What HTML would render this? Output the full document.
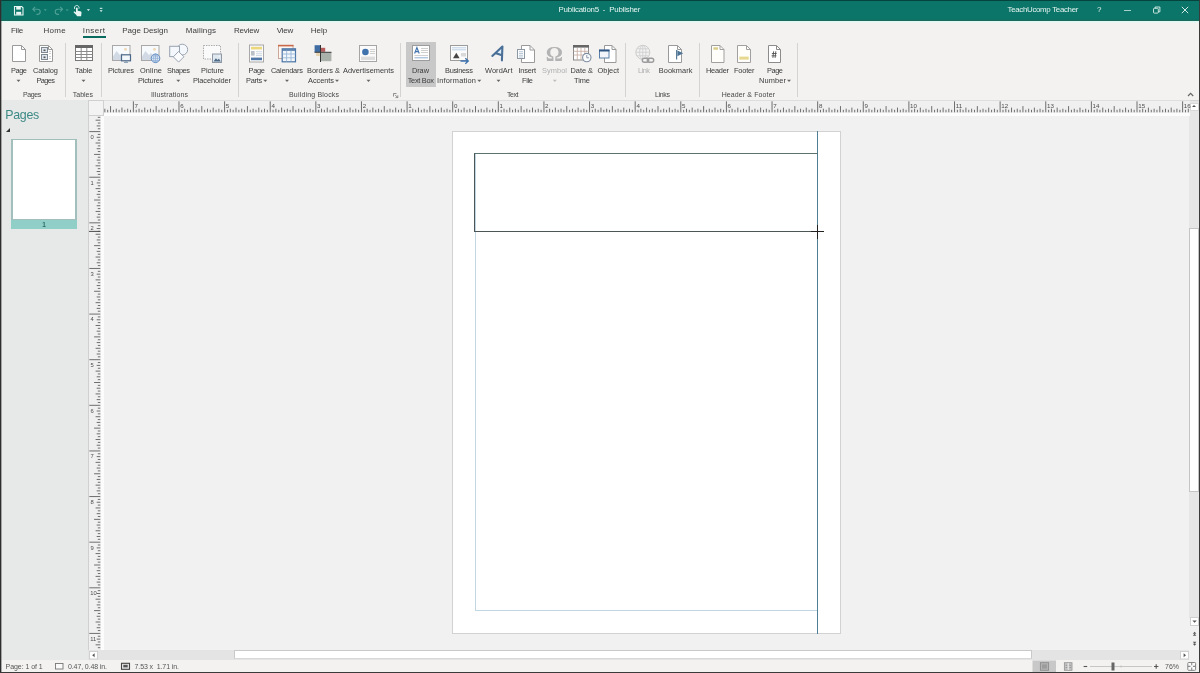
<!DOCTYPE html>
<html><head><meta charset="utf-8"><title>Publication5 - Publisher</title>
<style>
*{box-sizing:border-box;margin:0;padding:0}
html,body{width:1200px;height:673px;overflow:hidden;background:#f0f0f0;font-family:"Liberation Sans",sans-serif;}
.abs{position:absolute}
.x{position:absolute;white-space:nowrap;display:block}
#app{position:relative;width:1200px;height:673px;overflow:hidden;background:#f1f1f1;will-change:transform}
#title{left:0;top:0;width:1200px;height:20.750px;background:linear-gradient(#0a7568 0,#0a7568 17.500px,#176b5f 19.500px);border-top:1px solid #05443c}
#ribbon{left:0;top:21px;width:1200px;height:79px;background:#f3f2f1}
.sep{position:absolute;top:43px;width:1px;height:54px;background:#d4d3d2}
.ar{position:absolute;width:0;height:0;border-left:1.800px solid transparent;border-right:1.800px solid transparent;border-top:2.200px solid #707070}
#pane{left:1px;top:100px;width:87px;height:560px;background:#e7e8e8}
#status{left:0;top:660px;width:1200px;height:13px;background:#f3f2f1}
</style></head><body><div id="app">

<div id="title" class="abs"></div>
<span class="x" style="left:558.50px;top:5.36px;font-size:7.9px;line-height:10px;letter-spacing:-0.216px;color:#e6f4f1">Publication5 &nbsp;- &nbsp;Publisher</span>
<span class="x" style="left:1007.50px;top:5.16px;font-size:7.9px;line-height:10px;letter-spacing:-0.310px;color:#e6f4f1">TeachUcomp Teacher</span>
<span class="x" style="left:1097.00px;top:5.03px;font-size:8px;line-height:10px;letter-spacing:-0.449px;color:#e6f4f1">?</span>
<div id="ribbon" class="abs" style="top:20.750px;height:79.250px"></div>
<div class="abs" style="left:0;top:20.750px;width:1200px;height:2.500px;background:linear-gradient(#d9f8f2,#e6f7f3 60%,#f3f2f1)"></div>
<div class="abs" style="left:0;top:99.700px;width:1200px;height:1px;background:#d4d4d4"></div>
<span class="x" style="left:11.00px;top:26.03px;font-size:8px;line-height:10px;letter-spacing:-0.197px;color:#3c3c3c">File</span>
<span class="x" style="left:43.40px;top:26.03px;font-size:8px;line-height:10px;letter-spacing:0.286px;color:#3c3c3c">Home</span>
<span class="x" style="left:82.80px;top:26.03px;font-size:8px;line-height:10px;letter-spacing:0.438px;color:#3c3c3c">Insert</span>
<span class="x" style="left:122.30px;top:26.03px;font-size:8px;line-height:10px;letter-spacing:-0.011px;color:#3c3c3c">Page Design</span>
<span class="x" style="left:185.70px;top:26.03px;font-size:8px;line-height:10px;letter-spacing:0.136px;color:#3c3c3c">Mailings</span>
<span class="x" style="left:234.00px;top:26.03px;font-size:8px;line-height:10px;letter-spacing:-0.186px;color:#3c3c3c">Review</span>
<span class="x" style="left:276.70px;top:26.03px;font-size:8px;line-height:10px;letter-spacing:-0.199px;color:#3c3c3c">View</span>
<span class="x" style="left:310.70px;top:26.03px;font-size:8px;line-height:10px;letter-spacing:0.049px;color:#3c3c3c">Help</span>
<div class="abs" style="left:83px;top:36px;width:22.5px;height:2px;background:#0a6b5f"></div>
<div class="sep" style="left:64.5px"></div>
<div class="sep" style="left:101.0px"></div>
<div class="sep" style="left:238.0px"></div>
<div class="sep" style="left:399.9px"></div>
<div class="sep" style="left:625.2px"></div>
<div class="sep" style="left:698.5px"></div>
<div class="sep" style="left:797.1px"></div>
<span class="x" style="left:23.10px;top:90.17px;font-size:7px;line-height:10px;letter-spacing:-0.412px;color:#484848">Pages</span>
<span class="x" style="left:72.80px;top:90.17px;font-size:7px;line-height:10px;letter-spacing:-0.007px;color:#484848">Tables</span>
<span class="x" style="left:151.00px;top:90.17px;font-size:7px;line-height:10px;letter-spacing:0.133px;color:#484848">Illustrations</span>
<span class="x" style="left:289.00px;top:90.17px;font-size:7px;line-height:10px;letter-spacing:0.181px;color:#484848">Building Blocks</span>
<span class="x" style="left:507.00px;top:90.17px;font-size:7px;line-height:10px;letter-spacing:-0.446px;color:#484848">Text</span>
<span class="x" style="left:655.00px;top:90.17px;font-size:7px;line-height:10px;letter-spacing:-0.335px;color:#484848">Links</span>
<span class="x" style="left:721.70px;top:90.17px;font-size:7px;line-height:10px;letter-spacing:0.111px;color:#484848">Header &amp; Footer</span>
<div class="abs" style="left:406px;top:42px;width:30px;height:45px;background:#c8c8c8"></div>
<span class="x" style="left:11.00px;top:65.64px;font-size:7.4px;line-height:10px;letter-spacing:-0.428px;color:#3a3a3a">Page</span>
<span class="x" style="left:33.00px;top:65.64px;font-size:7.4px;line-height:10px;letter-spacing:-0.084px;color:#3a3a3a">Catalog</span>
<span class="x" style="left:36.50px;top:75.74px;font-size:7.4px;line-height:10px;letter-spacing:-0.621px;color:#3a3a3a">Pages</span>
<span class="x" style="left:75.00px;top:65.64px;font-size:7.4px;line-height:10px;letter-spacing:-0.048px;color:#3a3a3a">Table</span>
<span class="x" style="left:108.00px;top:65.64px;font-size:7.4px;line-height:10px;letter-spacing:-0.105px;color:#3a3a3a">Pictures</span>
<span class="x" style="left:140.00px;top:65.64px;font-size:7.4px;line-height:10px;letter-spacing:0.122px;color:#3a3a3a">Online</span>
<span class="x" style="left:138.00px;top:75.74px;font-size:7.4px;line-height:10px;letter-spacing:-0.176px;color:#3a3a3a">Pictures</span>
<span class="x" style="left:167.00px;top:65.64px;font-size:7.4px;line-height:10px;letter-spacing:-0.420px;color:#3a3a3a">Shapes</span>
<span class="x" style="left:201.00px;top:65.64px;font-size:7.4px;line-height:10px;letter-spacing:-0.005px;color:#3a3a3a">Picture</span>
<span class="x" style="left:193.00px;top:75.74px;font-size:7.4px;line-height:10px;letter-spacing:-0.108px;color:#3a3a3a">Placeholder</span>
<span class="x" style="left:248.60px;top:65.64px;font-size:7.4px;line-height:10px;letter-spacing:-0.294px;color:#3a3a3a">Page</span>
<span class="x" style="left:246.00px;top:75.74px;font-size:7.4px;line-height:10px;letter-spacing:-0.243px;color:#3a3a3a">Parts</span>
<span class="x" style="left:271.00px;top:65.64px;font-size:7.4px;line-height:10px;letter-spacing:-0.216px;color:#3a3a3a">Calendars</span>
<span class="x" style="left:307.00px;top:65.64px;font-size:7.4px;line-height:10px;letter-spacing:0.012px;color:#3a3a3a">Borders &amp;</span>
<span class="x" style="left:308.00px;top:75.74px;font-size:7.4px;line-height:10px;letter-spacing:-0.054px;color:#3a3a3a">Accents</span>
<span class="x" style="left:343.00px;top:65.64px;font-size:7.4px;line-height:10px;letter-spacing:0.000px;color:#3a3a3a">Advertisements</span>
<span class="x" style="left:412.00px;top:65.64px;font-size:7.4px;line-height:10px;letter-spacing:-0.090px;color:#3a3a3a">Draw</span>
<span class="x" style="left:407.70px;top:75.74px;font-size:7.4px;line-height:10px;letter-spacing:-0.297px;color:#3a3a3a">Text Box</span>
<span class="x" style="left:445.00px;top:65.64px;font-size:7.4px;line-height:10px;letter-spacing:-0.290px;color:#3a3a3a">Business</span>
<span class="x" style="left:437.00px;top:75.74px;font-size:7.4px;line-height:10px;letter-spacing:0.198px;color:#3a3a3a">Information</span>
<span class="x" style="left:485.00px;top:65.64px;font-size:7.4px;line-height:10px;letter-spacing:0.083px;color:#3a3a3a">WordArt</span>
<span class="x" style="left:518.50px;top:65.64px;font-size:7.4px;line-height:10px;letter-spacing:-0.202px;color:#3a3a3a">Insert</span>
<span class="x" style="left:522.00px;top:75.74px;font-size:7.4px;line-height:10px;letter-spacing:-0.308px;color:#3a3a3a">File</span>
<span class="x" style="left:570.50px;top:65.64px;font-size:7.4px;line-height:10px;letter-spacing:-0.025px;color:#3a3a3a">Date &amp;</span>
<span class="x" style="left:574.00px;top:75.74px;font-size:7.4px;line-height:10px;letter-spacing:-0.057px;color:#3a3a3a">Time</span>
<span class="x" style="left:597.50px;top:65.64px;font-size:7.4px;line-height:10px;letter-spacing:0.023px;color:#3a3a3a">Object</span>
<span class="x" style="left:658.80px;top:65.64px;font-size:7.4px;line-height:10px;letter-spacing:0.055px;color:#3a3a3a">Bookmark</span>
<span class="x" style="left:706.00px;top:65.64px;font-size:7.4px;line-height:10px;letter-spacing:-0.254px;color:#3a3a3a">Header</span>
<span class="x" style="left:734.00px;top:65.64px;font-size:7.4px;line-height:10px;letter-spacing:-0.178px;color:#3a3a3a">Footer</span>
<span class="x" style="left:767.00px;top:65.64px;font-size:7.4px;line-height:10px;letter-spacing:-0.428px;color:#3a3a3a">Page</span>
<span class="x" style="left:759.00px;top:75.74px;font-size:7.4px;line-height:10px;letter-spacing:0.136px;color:#3a3a3a">Number</span>
<span class="x" style="left:542.00px;top:65.64px;font-size:7.4px;line-height:10px;letter-spacing:0.065px;color:#b0b0b0">Symbol</span>
<span class="x" style="left:638.00px;top:65.64px;font-size:7.4px;line-height:10px;letter-spacing:-0.525px;color:#b0b0b0">Link</span>











<div id="pane" class="abs"></div>
<span class="x" style="left:5.30px;top:107.40px;font-size:12.4px;line-height:16px;letter-spacing:-0.315px;color:#3c8a85">Pages</span>
<div class="abs" style="left:6px;top:128px;width:0;height:0;border-left:4px solid transparent;border-bottom:4px solid #333"></div>
<div class="abs" style="left:11.400px;top:139px;width:65.200px;height:90.300px;background:#a3bfbc"></div>
<div class="abs" style="left:11.400px;top:219.600px;width:65.200px;height:9.700px;background:#90cfc7"></div>
<div class="abs" style="left:13px;top:140.300px;width:62.200px;height:79.200px;background:#fff"></div>
<div class="abs" style="left:11.400px;top:220.200px;width:65.200px;font-size:6.500px;line-height:9px;text-align:center;color:#2c6d66;font-weight:bold">1</div>
<div class="abs" style="left:452px;top:131px;width:389px;height:503px;background:#fff;border:1px solid #d2d2d2"></div>
<div class="abs" style="left:474.800px;top:153px;width:343.200px;height:458px;border:1px solid #c0d6e2"></div>
<div class="abs" style="left:817px;top:131px;width:1px;height:502.5px;background:#4f7f96"></div>
<div class="abs" style="left:474px;top:153px;width:343.5px;height:79px;border:1px solid #4c5656;border-top-color:#5a7272;border-right:none;"></div>
<div class="abs" style="left:811px;top:231px;width:13px;height:1px;background:#222"></div>
<div class="abs" style="left:817px;top:224.5px;width:1px;height:14px;background:#222"></div>
<div class="abs" style="left:1189.200px;top:100.500px;width:10px;height:517.500px;background:#e6e6e6"></div>
<div class="abs" style="left:1189.800px;top:102.500px;width:8.800px;height:8px;background:#fff;border:1px solid #d8d8d8"></div>
<div class="abs" style="left:1192.2px;top:105.3px;width:0;height:0;border-left:2.2px solid transparent;border-right:2.2px solid transparent;border-bottom:2.4px solid #555"></div>
<div class="abs" style="left:1189.200px;top:228.200px;width:9.800px;height:264.300px;background:#fff;border:1px solid #c4c4c4"></div>
<div class="abs" style="left:88px;top:650.300px;width:1101.200px;height:9.700px;background:#e4e4e4"></div>
<div class="abs" style="left:233.500px;top:649.800px;width:798px;height:9px;background:#fff;border:1px solid #c9c9c9;border-bottom-color:#d8d8d8"></div>
<div class="abs" style="left:88px;top:100px;width:1102px;height:15.500px;background:#fcfcfc"></div>
<div class="abs" style="left:103px;top:100px;width:1087px;height:12.500px;background:#f0f0f0;border-top:1px solid #dedede"></div>
<div class="abs" style="left:87.500px;top:100px;width:16.500px;height:15.500px;background:#f3f3f3;border:1px solid #d0d0d0"></div>
<div class="abs" style="left:87.500px;top:115.500px;width:16px;height:534.500px;background:#fcfcfc"></div>
<div class="abs" style="left:87.500px;top:115.500px;width:13.200px;height:534.500px;background:#f0f0f0;border-left:1px solid #d0d0d0"></div>
<svg class="abs" style="left:0;top:0" width="1200" height="673" viewBox="0 0 1200 673" shape-rendering="auto"><path d="M104.85 112.3v-3.6M107.70 112.3v-2.5M110.55 112.3v-6.2M113.40 112.3v-2.5M116.25 112.3v-3.6M119.10 112.3v-2.5M121.95 112.3v-4.7M124.81 112.3v-2.5M127.66 112.3v-3.6M130.51 112.3v-2.5M133.36 112.3v-11M136.21 112.3v-2.5M139.06 112.3v-3.6M141.91 112.3v-2.5M144.76 112.3v-4.7M147.62 112.3v-2.5M150.47 112.3v-3.6M153.32 112.3v-2.5M156.17 112.3v-6.2M159.02 112.3v-2.5M161.87 112.3v-3.6M164.72 112.3v-2.5M167.57 112.3v-4.7M170.43 112.3v-2.5M173.28 112.3v-3.6M176.13 112.3v-2.5M178.98 112.3v-11M181.83 112.3v-2.5M184.68 112.3v-3.6M187.53 112.3v-2.5M190.38 112.3v-4.7M193.24 112.3v-2.5M196.09 112.3v-3.6M198.94 112.3v-2.5M201.79 112.3v-6.2M204.64 112.3v-2.5M207.49 112.3v-3.6M210.34 112.3v-2.5M213.19 112.3v-4.7M216.05 112.3v-2.5M218.90 112.3v-3.6M221.75 112.3v-2.5M224.60 112.3v-11M227.45 112.3v-2.5M230.30 112.3v-3.6M233.15 112.3v-2.5M236.00 112.3v-4.7M238.86 112.3v-2.5M241.71 112.3v-3.6M244.56 112.3v-2.5M247.41 112.3v-6.2M250.26 112.3v-2.5M253.11 112.3v-3.6M255.96 112.3v-2.5M258.81 112.3v-4.7M261.67 112.3v-2.5M264.52 112.3v-3.6M267.37 112.3v-2.5M270.22 112.3v-11M273.07 112.3v-2.5M275.92 112.3v-3.6M278.77 112.3v-2.5M281.62 112.3v-4.7M284.48 112.3v-2.5M287.33 112.3v-3.6M290.18 112.3v-2.5M293.03 112.3v-6.2M295.88 112.3v-2.5M298.73 112.3v-3.6M301.58 112.3v-2.5M304.44 112.3v-4.7M307.29 112.3v-2.5M310.14 112.3v-3.6M312.99 112.3v-2.5M315.84 112.3v-11M318.69 112.3v-2.5M321.54 112.3v-3.6M324.39 112.3v-2.5M327.25 112.3v-4.7M330.10 112.3v-2.5M332.95 112.3v-3.6M335.80 112.3v-2.5M338.65 112.3v-6.2M341.50 112.3v-2.5M344.35 112.3v-3.6M347.20 112.3v-2.5M350.06 112.3v-4.7M352.91 112.3v-2.5M355.76 112.3v-3.6M358.61 112.3v-2.5M361.46 112.3v-11M364.31 112.3v-2.5M367.16 112.3v-3.6M370.01 112.3v-2.5M372.87 112.3v-4.7M375.72 112.3v-2.5M378.57 112.3v-3.6M381.42 112.3v-2.5M384.27 112.3v-6.2M387.12 112.3v-2.5M389.97 112.3v-3.6M392.82 112.3v-2.5M395.68 112.3v-4.7M398.53 112.3v-2.5M401.38 112.3v-3.6M404.23 112.3v-2.5M407.08 112.3v-11M409.93 112.3v-2.5M412.78 112.3v-3.6M415.63 112.3v-2.5M418.49 112.3v-4.7M421.34 112.3v-2.5M424.19 112.3v-3.6M427.04 112.3v-2.5M429.89 112.3v-6.2M432.74 112.3v-2.5M435.59 112.3v-3.6M438.44 112.3v-2.5M441.30 112.3v-4.7M444.15 112.3v-2.5M447.00 112.3v-3.6M449.85 112.3v-2.5M452.70 112.3v-11M455.55 112.3v-2.5M458.40 112.3v-3.6M461.25 112.3v-2.5M464.10 112.3v-4.7M466.96 112.3v-2.5M469.81 112.3v-3.6M472.66 112.3v-2.5M475.51 112.3v-6.2M478.36 112.3v-2.5M481.21 112.3v-3.6M484.06 112.3v-2.5M486.91 112.3v-4.7M489.77 112.3v-2.5M492.62 112.3v-3.6M495.47 112.3v-2.5M498.32 112.3v-11M501.17 112.3v-2.5M504.02 112.3v-3.6M506.87 112.3v-2.5M509.72 112.3v-4.7M512.58 112.3v-2.5M515.43 112.3v-3.6M518.28 112.3v-2.5M521.13 112.3v-6.2M523.98 112.3v-2.5M526.83 112.3v-3.6M529.68 112.3v-2.5M532.53 112.3v-4.7M535.39 112.3v-2.5M538.24 112.3v-3.6M541.09 112.3v-2.5M543.94 112.3v-11M546.79 112.3v-2.5M549.64 112.3v-3.6M552.49 112.3v-2.5M555.35 112.3v-4.7M558.20 112.3v-2.5M561.05 112.3v-3.6M563.90 112.3v-2.5M566.75 112.3v-6.2M569.60 112.3v-2.5M572.45 112.3v-3.6M575.30 112.3v-2.5M578.15 112.3v-4.7M581.01 112.3v-2.5M583.86 112.3v-3.6M586.71 112.3v-2.5M589.56 112.3v-11M592.41 112.3v-2.5M595.26 112.3v-3.6M598.11 112.3v-2.5M600.96 112.3v-4.7M603.82 112.3v-2.5M606.67 112.3v-3.6M609.52 112.3v-2.5M612.37 112.3v-6.2M615.22 112.3v-2.5M618.07 112.3v-3.6M620.92 112.3v-2.5M623.77 112.3v-4.7M626.63 112.3v-2.5M629.48 112.3v-3.6M632.33 112.3v-2.5M635.18 112.3v-11M638.03 112.3v-2.5M640.88 112.3v-3.6M643.73 112.3v-2.5M646.59 112.3v-4.7M649.44 112.3v-2.5M652.29 112.3v-3.6M655.14 112.3v-2.5M657.99 112.3v-6.2M660.84 112.3v-2.5M663.69 112.3v-3.6M666.54 112.3v-2.5M669.39 112.3v-4.7M672.25 112.3v-2.5M675.10 112.3v-3.6M677.95 112.3v-2.5M680.80 112.3v-11M683.65 112.3v-2.5M686.50 112.3v-3.6M689.35 112.3v-2.5M692.20 112.3v-4.7M695.06 112.3v-2.5M697.91 112.3v-3.6M700.76 112.3v-2.5M703.61 112.3v-6.2M706.46 112.3v-2.5M709.31 112.3v-3.6M712.16 112.3v-2.5M715.01 112.3v-4.7M717.87 112.3v-2.5M720.72 112.3v-3.6M723.57 112.3v-2.5M726.42 112.3v-11M729.27 112.3v-2.5M732.12 112.3v-3.6M734.97 112.3v-2.5M737.83 112.3v-4.7M740.68 112.3v-2.5M743.53 112.3v-3.6M746.38 112.3v-2.5M749.23 112.3v-6.2M752.08 112.3v-2.5M754.93 112.3v-3.6M757.78 112.3v-2.5M760.63 112.3v-4.7M763.49 112.3v-2.5M766.34 112.3v-3.6M769.19 112.3v-2.5M772.04 112.3v-11M774.89 112.3v-2.5M777.74 112.3v-3.6M780.59 112.3v-2.5M783.44 112.3v-4.7M786.30 112.3v-2.5M789.15 112.3v-3.6M792.00 112.3v-2.5M794.85 112.3v-6.2M797.70 112.3v-2.5M800.55 112.3v-3.6M803.40 112.3v-2.5M806.25 112.3v-4.7M809.11 112.3v-2.5M811.96 112.3v-3.6M814.81 112.3v-2.5M817.66 112.3v-11M820.51 112.3v-2.5M823.36 112.3v-3.6M826.21 112.3v-2.5M829.06 112.3v-4.7M831.92 112.3v-2.5M834.77 112.3v-3.6M837.62 112.3v-2.5M840.47 112.3v-6.2M843.32 112.3v-2.5M846.17 112.3v-3.6M849.02 112.3v-2.5M851.88 112.3v-4.7M854.73 112.3v-2.5M857.58 112.3v-3.6M860.43 112.3v-2.5M863.28 112.3v-11M866.13 112.3v-2.5M868.98 112.3v-3.6M871.83 112.3v-2.5M874.68 112.3v-4.7M877.54 112.3v-2.5M880.39 112.3v-3.6M883.24 112.3v-2.5M886.09 112.3v-6.2M888.94 112.3v-2.5M891.79 112.3v-3.6M894.64 112.3v-2.5M897.49 112.3v-4.7M900.35 112.3v-2.5M903.20 112.3v-3.6M906.05 112.3v-2.5M908.90 112.3v-11M911.75 112.3v-2.5M914.60 112.3v-3.6M917.45 112.3v-2.5M920.30 112.3v-4.7M923.16 112.3v-2.5M926.01 112.3v-3.6M928.86 112.3v-2.5M931.71 112.3v-6.2M934.56 112.3v-2.5M937.41 112.3v-3.6M940.26 112.3v-2.5M943.12 112.3v-4.7M945.97 112.3v-2.5M948.82 112.3v-3.6M951.67 112.3v-2.5M954.52 112.3v-11M957.37 112.3v-2.5M960.22 112.3v-3.6M963.07 112.3v-2.5M965.92 112.3v-4.7M968.78 112.3v-2.5M971.63 112.3v-3.6M974.48 112.3v-2.5M977.33 112.3v-6.2M980.18 112.3v-2.5M983.03 112.3v-3.6M985.88 112.3v-2.5M988.73 112.3v-4.7M991.59 112.3v-2.5M994.44 112.3v-3.6M997.29 112.3v-2.5M1000.14 112.3v-11M1002.99 112.3v-2.5M1005.84 112.3v-3.6M1008.69 112.3v-2.5M1011.54 112.3v-4.7M1014.40 112.3v-2.5M1017.25 112.3v-3.6M1020.10 112.3v-2.5M1022.95 112.3v-6.2M1025.80 112.3v-2.5M1028.65 112.3v-3.6M1031.50 112.3v-2.5M1034.36 112.3v-4.7M1037.21 112.3v-2.5M1040.06 112.3v-3.6M1042.91 112.3v-2.5M1045.76 112.3v-11M1048.61 112.3v-2.5M1051.46 112.3v-3.6M1054.31 112.3v-2.5M1057.16 112.3v-4.7M1060.02 112.3v-2.5M1062.87 112.3v-3.6M1065.72 112.3v-2.5M1068.57 112.3v-6.2M1071.42 112.3v-2.5M1074.27 112.3v-3.6M1077.12 112.3v-2.5M1079.97 112.3v-4.7M1082.83 112.3v-2.5M1085.68 112.3v-3.6M1088.53 112.3v-2.5M1091.38 112.3v-11M1094.23 112.3v-2.5M1097.08 112.3v-3.6M1099.93 112.3v-2.5M1102.78 112.3v-4.7M1105.64 112.3v-2.5M1108.49 112.3v-3.6M1111.34 112.3v-2.5M1114.19 112.3v-6.2M1117.04 112.3v-2.5M1119.89 112.3v-3.6M1122.74 112.3v-2.5M1125.60 112.3v-4.7M1128.45 112.3v-2.5M1131.30 112.3v-3.6M1134.15 112.3v-2.5M1137.00 112.3v-11M1139.85 112.3v-2.5M1142.70 112.3v-3.6M1145.55 112.3v-2.5M1148.40 112.3v-4.7M1151.26 112.3v-2.5M1154.11 112.3v-3.6M1156.96 112.3v-2.5M1159.81 112.3v-6.2M1162.66 112.3v-2.5M1165.51 112.3v-3.6M1168.36 112.3v-2.5M1171.21 112.3v-4.7M1174.07 112.3v-2.5M1176.92 112.3v-3.6M1179.77 112.3v-2.5M1182.62 112.3v-11M1185.47 112.3v-2.5M1188.32 112.3v-3.6" stroke="#6e6e6e" stroke-width="1" fill="none"/><path d="M100.3 117.34h-2.5M100.3 120.19h-4.7M100.3 123.05h-2.5M100.3 125.90h-3.6M100.3 128.75h-2.5M100.3 131.60h-11M100.3 134.45h-2.5M100.3 137.30h-3.6M100.3 140.15h-2.5M100.3 143.00h-4.7M100.3 145.86h-2.5M100.3 148.71h-3.6M100.3 151.56h-2.5M100.3 154.41h-6.2M100.3 157.26h-2.5M100.3 160.11h-3.6M100.3 162.96h-2.5M100.3 165.81h-4.7M100.3 168.67h-2.5M100.3 171.52h-3.6M100.3 174.37h-2.5M100.3 177.22h-11M100.3 180.07h-2.5M100.3 182.92h-3.6M100.3 185.77h-2.5M100.3 188.62h-4.7M100.3 191.48h-2.5M100.3 194.33h-3.6M100.3 197.18h-2.5M100.3 200.03h-6.2M100.3 202.88h-2.5M100.3 205.73h-3.6M100.3 208.58h-2.5M100.3 211.44h-4.7M100.3 214.29h-2.5M100.3 217.14h-3.6M100.3 219.99h-2.5M100.3 222.84h-11M100.3 225.69h-2.5M100.3 228.54h-3.6M100.3 231.39h-2.5M100.3 234.25h-4.7M100.3 237.10h-2.5M100.3 239.95h-3.6M100.3 242.80h-2.5M100.3 245.65h-6.2M100.3 248.50h-2.5M100.3 251.35h-3.6M100.3 254.20h-2.5M100.3 257.06h-4.7M100.3 259.91h-2.5M100.3 262.76h-3.6M100.3 265.61h-2.5M100.3 268.46h-11M100.3 271.31h-2.5M100.3 274.16h-3.6M100.3 277.01h-2.5M100.3 279.87h-4.7M100.3 282.72h-2.5M100.3 285.57h-3.6M100.3 288.42h-2.5M100.3 291.27h-6.2M100.3 294.12h-2.5M100.3 296.97h-3.6M100.3 299.82h-2.5M100.3 302.67h-4.7M100.3 305.53h-2.5M100.3 308.38h-3.6M100.3 311.23h-2.5M100.3 314.08h-11M100.3 316.93h-2.5M100.3 319.78h-3.6M100.3 322.63h-2.5M100.3 325.49h-4.7M100.3 328.34h-2.5M100.3 331.19h-3.6M100.3 334.04h-2.5M100.3 336.89h-6.2M100.3 339.74h-2.5M100.3 342.59h-3.6M100.3 345.44h-2.5M100.3 348.29h-4.7M100.3 351.15h-2.5M100.3 354.00h-3.6M100.3 356.85h-2.5M100.3 359.70h-11M100.3 362.55h-2.5M100.3 365.40h-3.6M100.3 368.25h-2.5M100.3 371.11h-4.7M100.3 373.96h-2.5M100.3 376.81h-3.6M100.3 379.66h-2.5M100.3 382.51h-6.2M100.3 385.36h-2.5M100.3 388.21h-3.6M100.3 391.06h-2.5M100.3 393.91h-4.7M100.3 396.77h-2.5M100.3 399.62h-3.6M100.3 402.47h-2.5M100.3 405.32h-11M100.3 408.17h-2.5M100.3 411.02h-3.6M100.3 413.87h-2.5M100.3 416.73h-4.7M100.3 419.58h-2.5M100.3 422.43h-3.6M100.3 425.28h-2.5M100.3 428.13h-6.2M100.3 430.98h-2.5M100.3 433.83h-3.6M100.3 436.68h-2.5M100.3 439.53h-4.7M100.3 442.39h-2.5M100.3 445.24h-3.6M100.3 448.09h-2.5M100.3 450.94h-11M100.3 453.79h-2.5M100.3 456.64h-3.6M100.3 459.49h-2.5M100.3 462.35h-4.7M100.3 465.20h-2.5M100.3 468.05h-3.6M100.3 470.90h-2.5M100.3 473.75h-6.2M100.3 476.60h-2.5M100.3 479.45h-3.6M100.3 482.30h-2.5M100.3 485.15h-4.7M100.3 488.01h-2.5M100.3 490.86h-3.6M100.3 493.71h-2.5M100.3 496.56h-11M100.3 499.41h-2.5M100.3 502.26h-3.6M100.3 505.11h-2.5M100.3 507.96h-4.7M100.3 510.82h-2.5M100.3 513.67h-3.6M100.3 516.52h-2.5M100.3 519.37h-6.2M100.3 522.22h-2.5M100.3 525.07h-3.6M100.3 527.92h-2.5M100.3 530.77h-4.7M100.3 533.63h-2.5M100.3 536.48h-3.6M100.3 539.33h-2.5M100.3 542.18h-11M100.3 545.03h-2.5M100.3 547.88h-3.6M100.3 550.73h-2.5M100.3 553.58h-4.7M100.3 556.44h-2.5M100.3 559.29h-3.6M100.3 562.14h-2.5M100.3 564.99h-6.2M100.3 567.84h-2.5M100.3 570.69h-3.6M100.3 573.54h-2.5M100.3 576.39h-4.7M100.3 579.25h-2.5M100.3 582.10h-3.6M100.3 584.95h-2.5M100.3 587.80h-11M100.3 590.65h-2.5M100.3 593.50h-3.6M100.3 596.35h-2.5M100.3 599.20h-4.7M100.3 602.06h-2.5M100.3 604.91h-3.6M100.3 607.76h-2.5M100.3 610.61h-6.2M100.3 613.46h-2.5M100.3 616.31h-3.6M100.3 619.16h-2.5M100.3 622.01h-4.7M100.3 624.87h-2.5M100.3 627.72h-3.6M100.3 630.57h-2.5M100.3 633.42h-11M100.3 636.27h-2.5M100.3 639.12h-3.6M100.3 641.97h-2.5M100.3 644.83h-4.7M100.3 647.68h-2.5" stroke="#6e6e6e" stroke-width="1" fill="none"/><g font-family="Liberation Sans, sans-serif" font-size="6.200" fill="#4c4c4c"><text x="134.6" y="107.6">7</text><text x="180.2" y="107.6">6</text><text x="225.8" y="107.6">5</text><text x="271.4" y="107.6">4</text><text x="317.0" y="107.6">3</text><text x="362.7" y="107.6">2</text><text x="408.3" y="107.6">1</text><text x="453.9" y="107.6">0</text><text x="499.5" y="107.6">1</text><text x="545.1" y="107.6">2</text><text x="590.8" y="107.6">3</text><text x="636.4" y="107.6">4</text><text x="682.0" y="107.6">5</text><text x="727.6" y="107.6">6</text><text x="773.2" y="107.6">7</text><text x="818.9" y="107.6">8</text><text x="864.5" y="107.6">9</text><text x="910.1" y="107.6">10</text><text x="955.7" y="107.6">11</text><text x="1001.3" y="107.6">12</text><text x="1047.0" y="107.6">13</text><text x="1092.6" y="107.6">14</text><text x="1138.2" y="107.6">15</text><text x="1183.8" y="107.6">16</text><text font-size="5.800" x="90.4" y="138.9">0</text><text font-size="5.800" x="90.4" y="184.5">1</text><text font-size="5.800" x="90.4" y="230.1">2</text><text font-size="5.800" x="90.4" y="275.8">3</text><text font-size="5.800" x="90.4" y="321.4">4</text><text font-size="5.800" x="90.4" y="367.0">5</text><text font-size="5.800" x="90.4" y="412.6">6</text><text font-size="5.800" x="90.4" y="458.2">7</text><text font-size="5.800" x="90.4" y="503.9">8</text><text font-size="5.800" x="90.4" y="549.5">9</text><text font-size="5.800" x="90.3" y="595.1">10</text><text font-size="5.800" x="90.3" y="640.7">11</text></g><path d="M89 231.400h11.300" stroke="#4a4a4a" stroke-width="1"/></svg>
<div id="status" class="abs"></div>
<span class="x" style="left:5.60px;top:662.07px;font-size:7px;line-height:9px;letter-spacing:-0.059px;color:#555">Page: 1 of 1</span>
<span class="x" style="left:68.00px;top:662.07px;font-size:7px;line-height:9px;letter-spacing:-0.114px;color:#555">0.47, 0.48 in.</span>
<span class="x" style="left:134.50px;top:662.07px;font-size:7px;line-height:9px;letter-spacing:-0.095px;color:#555">7.53 x &nbsp;1.71 in.</span>
<span class="x" style="left:1165.00px;top:662.07px;font-size:7px;line-height:9px;letter-spacing:-0.005px;color:#555">76%</span>
<svg class="abs" style="left:0;top:0;filter:blur(.38px)" width="1200" height="673" viewBox="0 0 1200 673"><path d="M12.5 45.5h9l4 4v12h-13z" fill="#fff" stroke="#9a9a9a"/><path d="M21.5 45.5v4h4" fill="none" stroke="#9a9a9a"/><path d="M39.5 45.5h9l4 4v12h-13z" fill="#fff" stroke="#9a9a9a"/><path d="M48.5 45.5v4h4" fill="none" stroke="#9a9a9a"/><rect x="41.5" y="47.5" width="6" height="5" fill="#dfe6ee" stroke="#7f8790"/><rect x="43.5" y="49.5" width="2" height="1.6" fill="#555"/><rect x="41.5" y="54.5" width="6" height="5" fill="#dfe6ee" stroke="#7f8790"/><rect x="43.5" y="56.5" width="2" height="1.6" fill="#555"/><path d="M49 51.5h2M49 53.5h2M49 56.5h2M49 58.5h2" stroke="#d0d0d0"/><rect x="75.5" y="45.5" width="17" height="15" fill="#fff" stroke="#777"/><rect x="75" y="45" width="18" height="3" fill="#666"/><path d="M75.5 51.5h17M75.5 54.5h17M75.5 57.5h17M81.2 48v12.5M86.8 48v12.5" stroke="#8a8a8a" fill="none"/><rect x="112.5" y="45.5" width="17.5" height="15" fill="#f7fafd" stroke="#a8a8a8"/><path d="M113 60v-3.5l3.5-5.5 3.5 4 2-2 4 4.5v2.5z" fill="#d1dae4"/><circle cx="125.5" cy="49.3" r="1.500" fill="#efd9b6"/><rect x="121.500" y="54.800" width="9" height="6" fill="#f1f6fb" stroke="#4b6787" stroke-width="1.200"/><path d="M124 62.400h4M126 61v1.400" stroke="#7d95ae" stroke-width=".9"/><rect x="141.5" y="45.5" width="17.5" height="15" fill="#f7fafd" stroke="#a8a8a8"/><path d="M142 60v-3.5l3.5-5.5 3.5 4 2-2 4 4.5v2.5z" fill="#d1dae4"/><circle cx="154.5" cy="49.3" r="1.500" fill="#efd9b6"/><circle cx="155.500" cy="58.300" r="4.300" fill="#e3edf8" stroke="#5d88bd" stroke-width="1"/><path d="M151.300 58.300h8.400M155.500 54v8.600M152.300 56h6.400M152.300 60.600h6.400" stroke="#7ba0cf" stroke-width=".6" fill="none"/><ellipse cx="155.500" cy="58.300" rx="2" ry="4.300" fill="none" stroke="#7ba0cf" stroke-width=".6"/><circle cx="182.300" cy="49.600" r="5.400" fill="#f4f7fb" stroke="#98a3b0"/><rect x="169.700" y="46.300" width="9.800" height="10.300" fill="#f4f7fb" stroke="#98a3b0"/><path d="M178.600 51.500l5.300 5.300-5.300 5.300-5.300-5.300z" fill="#fbfcfe" stroke="#98a3b0"/><rect x="203.5" y="45.5" width="17" height="13.5" fill="#fafafa" stroke="#a8a8a8" stroke-dasharray="1.400 1.100"/><rect x="212.5" y="54" width="9" height="8.5" fill="#dfe7ef" stroke="#8f9aa6"/><path d="M213.5 61.5l2.4-3.2 1.6 1.8 1.4-1.4 2 2.8z" fill="#4f6a87"/><circle cx="219.3" cy="56.3" r=".8" fill="#f4f4f4"/><rect x="249.5" y="45" width="14" height="17" fill="#fbfbfb" stroke="#a8a8a8"/><rect x="251" y="46.8" width="11" height="2.6" fill="#ecd77c"/><rect x="251" y="51" width="3.6" height="4.6" fill="#b9bfc6"/><path d="M256 51.7h6M256 53.7h6M256 55.5h6" stroke="#cfd9e4"/><rect x="251" y="57.6" width="11" height="2.6" fill="#4f77a8"/><rect x="278.5" y="45.5" width="14.5" height="13" fill="#fdf6f2" stroke="#c9a99a"/><path d="M278 45.6h15.5" stroke="#c8694a" stroke-width="1.6"/><rect x="282.2" y="48.8" width="13.3" height="13" fill="#f1f6fb" stroke="#4a74a6" stroke-width="1.2"/><path d="M282.2 50h13.3" stroke="#4a74a6" stroke-width="1.6"/><path d="M282.5 54h13M282.5 57.8h13M286.6 50.5v11M291 50.5v11" stroke="#8fb0d4" stroke-width=".8" fill="none"/><rect x="314.6" y="45.2" width="5.6" height="6.8" fill="#3f6da3"/><rect x="321" y="47.8" width="4.2" height="4" fill="#b65c5c"/><rect x="321" y="52.6" width="10.4" height="8.6" fill="#aab0aa"/><rect x="316.2" y="53" width="3.6" height="3" fill="#e6d3ae"/><path d="M320.5 45v17M314.5 52.3h17" stroke="#333" stroke-width="1"/><rect x="359.5" y="45.5" width="17" height="16" fill="#fafafa" stroke="#a5a5a5"/><circle cx="365.4" cy="52" r="3.3" fill="#3f72ad"/><path d="M370 49.5h5M370 51.5h5M370 53.5h5" stroke="#cfcfcf"/><rect x="361" y="56.6" width="14" height="3.4" fill="#dcdcdc"/><rect x="412.5" y="45.5" width="17" height="15" fill="#fdfdfd" stroke="#9c9c9c"/><path d="M414.6 53.5l2.3-6 2.3 6M415.4 51.6h3" stroke="#3f72ad" stroke-width="1.1" fill="none"/><path d="M421 48.5h7M421 50.5h7M421 52.5h7M414.5 55.5h13.5" stroke="#cfcfcf"/><path d="M414.5 57.8h13.5" stroke="#8fb0d4"/><rect x="450.5" y="45.5" width="17" height="15" fill="#fbfbfb" stroke="#9c9c9c"/><path d="M452 47.8h14M452 49.8h14" stroke="#bcd0e6"/><path d="M453 58.3l3.3-5.6 3.3 5.6z" fill="#444"/><rect x="461" y="53" width="5" height="3.5" fill="#d9d9d9"/><path d="M460.5 61h7.5M465.3 58.2l3 2.8-3 2.8" stroke="#3f72ad" stroke-width="1.3" fill="none"/><path d="M497.300 52.300L502 47.800L501.800 54.800z" fill="#d5eafa" stroke="#e2f0fb" stroke-width="2.5"/><path d="M492.300 55.900L502.400 46.500L501.900 60.400M496 53.300L501.900 55.300" stroke="#4a6f97" stroke-width="2.100" fill="none" stroke-linecap="round" stroke-linejoin="round"/><path d="M521.5 45.5h8.5l4.5 4.5v12.5h-13z" fill="#fff" stroke="#9a9a9a"/><path d="M530.0 45.5v4.5h4.5" fill="none" stroke="#9a9a9a"/><rect x="517.5" y="49.5" width="7" height="9" fill="#fbfcfd" stroke="#8d98a5"/><path d="M519 51.700h4M519 53.500h4M519 55.300h4M519 57h4" stroke="#9fb1c6" stroke-width=".7"/><text x="554.300" y="60.800" font-family="Liberation Serif, serif" font-size="21.500" font-weight="bold" fill="#b3b3b3" text-anchor="middle">&#937;</text><rect x="573.5" y="45.5" width="15" height="14.5" fill="#fff" stroke="#8a8a8a"/><rect x="573" y="45" width="16" height="2.6" fill="#666"/><path d="M573.5 51.3h15M573.5 55h15M577.3 47.6v12.4M581 47.6v12.4M584.8 47.6v12.4" stroke="#c4a9a0" stroke-width=".8" fill="none"/><circle cx="586.8" cy="57.6" r="4.2" fill="#fbfcfe" stroke="#7d8da0" stroke-width="1.1"/><path d="M586.8 55v2.8h2.2" stroke="#7d8da0" stroke-width=".9" fill="none"/><path d="M604.5 45.5h7.5l4 4v13h-11.5z" fill="#fff" stroke="#9a9a9a"/><path d="M612.0 45.5v4h4" fill="none" stroke="#9a9a9a"/><rect x="599.5" y="50" width="9.5" height="8" fill="#f2f6fa" stroke="#5a7fa8"/><path d="M599 50.6h10.5" stroke="#2f5682" stroke-width="1.8"/><circle cx="642.800" cy="52.300" r="7" fill="none" stroke="#cacaca" stroke-width="1"/><ellipse cx="642.800" cy="52.300" rx="3.200" ry="7" fill="none" stroke="#d0d0d0" stroke-width=".9"/><path d="M636 52.300h13.600M637 48.800h11.600M637 55.800h11.600M642.800 45.300v14" stroke="#d0d0d0" stroke-width=".9"/><rect x="642.300" y="58.300" width="6.400" height="4" rx="2" fill="#f3f2f1" stroke="#9c9c9c" stroke-width="1.400"/><rect x="647.300" y="58.300" width="6.400" height="4" rx="2" fill="none" stroke="#9c9c9c" stroke-width="1.400"/><path d="M668.5 45.5h9l4 4v13h-13z" fill="#fff" stroke="#9a9a9a"/><path d="M677.5 45.5v4h4" fill="none" stroke="#9a9a9a"/><path d="M676.600 50v9.600" stroke="#5b7c98" stroke-width="1.200"/><path d="M677.400 50.400l5.800 2.900-5.800 2.900z" fill="#4a7396"/><path d="M711.5 45.5h8.5l4 4v13h-12.5z" fill="#fffefb" stroke="#a0a0a0"/><path d="M720.0 45.5v4h4" fill="none" stroke="#a0a0a0"/><rect x="713.4" y="47.3" width="4.6" height="2.4" fill="#d9cc86"/><path d="M737.5 45.5h9l4 4v13h-13z" fill="#fffefb" stroke="#a0a0a0"/><path d="M746.5 45.5v4h4" fill="none" stroke="#a0a0a0"/><rect x="739.3" y="56.6" width="9.4" height="3" fill="#e6d98f"/><path d="M768.5 45.5h8l4 4v13h-12z" fill="#fff" stroke="#8c8c8c"/><path d="M776.5 45.5v4h4" fill="none" stroke="#8c8c8c"/><path d="M773.600 51.300l-.700 6.600M775.800 51.300l-.700 6.600M771.900 53.500h4.800M771.600 55.800h4.800" stroke="#4a4a4a" stroke-width=".85" fill="none"/><path d="M393.5 96.5v-3h3" stroke="#777" stroke-width=".8" fill="none"/><path d="M395 94.8l2.6 2.6M397.8 95.3v2.3h-2.3" stroke="#777" stroke-width=".8" fill="none"/><path d="M1188 96l2.6-2.6 2.6 2.6" stroke="#666" stroke-width="1.2" fill="none"/><path d="M14.5 6.5h7.2l1.3 1.3v7.2h-8.5z" fill="none" stroke="#e9f5f3" stroke-width="1.1"/><rect x="16.2" y="6.8" width="4.6" height="2.8" fill="#e9f5f3"/><rect x="16.2" y="11.8" width="5" height="3" fill="#e9f5f3"/><path d="M33 9.2h4.6a2.6 2.6 0 0 1 0 5.2h-1.2M35.2 6.8l-2.4 2.4 2.4 2.4" stroke="#4fa196" stroke-width="1.1" fill="none"/><path d="M43.8 9.3h3l-1.5 1.7z" fill="#4fa196"/><path d="M62.4 9.2h-4.6a2.6 2.6 0 0 0 0 5.2h1.2M60.2 6.8l2.4 2.4-2.4 2.4" stroke="#4fa196" stroke-width="1.1" fill="none"/><path d="M66 10h2.4" stroke="#4fa196" stroke-width="1"/><path d="M77.200 16.200c-1.200-1.400-2.600-2.800-3.400-3.600c-.6-.8.300-1.600 1.100-1l1.100.9v-4.300c0-1.100 1.700-1.100 1.700 0v2.500l2.600.6c.9.200 1.300.8 1.200 1.700l-.4 3.200z" fill="#e9f5f3"/><path d="M74.900 9.100a2.300 2.300 0 1 1 4-.4" stroke="#e9f5f3" stroke-width=".9" fill="none"/><path d="M86.800 9.200h3.200l-1.600 1.800z" fill="#e9f5f3"/><path d="M99.800 8.300h2.600" stroke="#e9f5f3" stroke-width="1"/><path d="M99.600 10.200h3l-1.500 1.700z" fill="#e9f5f3"/><path d="M1124 10.500h7" stroke="#e9f5f3" stroke-width=".8" opacity=".9"/><rect x="1153.500" y="8.300" width="4.800" height="4.800" rx=".8" fill="none" stroke="#e9f5f3" stroke-width=".85"/><path d="M1155.100 8.200v-1.200h4.800v4.800h-1.500" fill="none" stroke="#e9f5f3" stroke-width=".85"/><path d="M1181.800 6.800l6.400 6.400M1188.200 6.800l-6.400 6.400" stroke="#e9f5f3" stroke-width=".9"/><rect x="55.500" y="663.500" width="7.500" height="5.500" fill="#fafafa" stroke="#777" stroke-width=".9"/><rect x="121.500" y="663.300" width="8" height="6" fill="#e8e8e8" stroke="#444" stroke-width="1.100"/><rect x="123.300" y="664.800" width="4.400" height="2.600" fill="#555"/><rect x="1032.500" y="660.500" width="23.500" height="12" fill="#c8c8c8"/><rect x="1040.400" y="662.700" width="8.200" height="7.600" fill="#b4b4b4" stroke="#8c8c8c" stroke-width=".9"/><rect x="1042" y="664.400" width="5" height="4.200" fill="#9c9c9c"/><rect x="1064.400" y="662.700" width="7.600" height="7.600" fill="#c4c4c4" stroke="#999" stroke-width=".9"/><path d="M1068.200 663v7" stroke="#ececec" stroke-width="1"/><path d="M1065.600 665.300h1.600M1069.400 665.300h1.600M1065.600 667.600h1.600M1069.400 667.600h1.600" stroke="#8a8a8a" stroke-width=".8"/><path d="M1083.600 666.500h3.600" stroke="#555" stroke-width="1.100"/><path d="M1090 666.500h62" stroke="#c6c6c6" stroke-width="1"/><path d="M1121 665.500v2" stroke="#bdbdbd" stroke-width="1"/><rect x="1111.500" y="662.500" width="3" height="8" fill="#666"/><path d="M1154 666.500h4.400M1156.200 664.300v4.400" stroke="#555" stroke-width="1.100"/><rect x="1187.800" y="662.500" width="7.800" height="7.800" rx=".8" fill="#fbfbfb" stroke="#858585" stroke-width="1"/><path d="M1191.700 662.600v2.600M1191.700 670.200v-2.600M1187.900 666.400h2.600M1195.500 666.400h-2.600" stroke="#8a8a8a" stroke-width="1.100" fill="none"/><rect x="89.500" y="651.500" width="8" height="7.500" fill="#fff" stroke="#d0d0d0"/><path d="M94.600 653.300v4l-2.400-2z" fill="#555"/><rect x="1180.500" y="651.500" width="8" height="7.500" fill="#fff" stroke="#d0d0d0"/><path d="M1183.600 653.300v4l2.400-2z" fill="#555"/><rect x="1190.500" y="617.500" width="8" height="8" fill="#fff" stroke="#d0d0d0"/><path d="M1192.400 620.400h4.400l-2.200 2.400z" fill="#555"/><path d="M1192.800 633.800l1.800-2 1.800 2zM1192.800 635.800l1.800-2 1.800 2z" fill="#555"/><path d="M1192.800 641.800l1.800 2 1.800-2zM1192.800 643.800l1.800 2 1.800-2z" fill="#555"/><path d="M16.50 79.70h4l-2 2.300z" fill="#666"/><path d="M81.50 79.70h4l-2 2.300z" fill="#666"/><path d="M176.30 79.70h4l-2 2.300z" fill="#666"/><path d="M285.00 79.70h4l-2 2.300z" fill="#666"/><path d="M366.50 79.70h4l-2 2.300z" fill="#666"/><path d="M496.50 79.70h4l-2 2.300z" fill="#666"/><path d="M552.80 79.70h4l-2 2.300z" fill="#bdbdbd"/><path d="M263.30 79.70h4l-2 2.300z" fill="#666"/><path d="M335.00 79.70h4l-2 2.300z" fill="#666"/><path d="M477.30 79.70h4l-2 2.300z" fill="#666"/><path d="M787.00 79.70h4l-2 2.300z" fill="#666"/></svg>
<div class="abs" style="left:0;top:0;width:2px;height:673px;background:linear-gradient(to right,#2e2e2e 0,#2e2e2e 1px,rgba(60,60,60,.4) 1px,rgba(60,60,60,.4) 2px)"></div>
<div class="abs" style="left:1199px;top:0;width:1px;height:673px;background:#3a3a3a"></div>
<div class="abs" style="left:0;top:671.500px;width:1200px;height:1.500px;background:#3a3a3a"></div>
</div></body></html>
